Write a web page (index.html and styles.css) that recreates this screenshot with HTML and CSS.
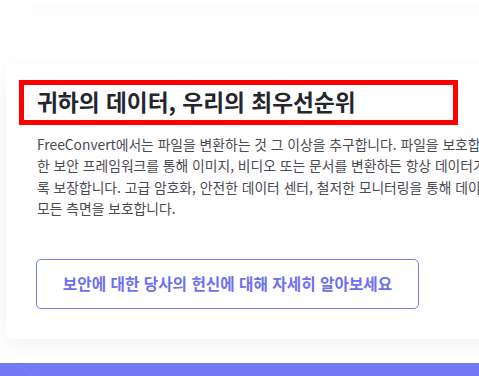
FILE: index.html
```html
<!DOCTYPE html>
<html lang="ko">
<head>
<meta charset="utf-8">
<link rel="stylesheet" href="styles.css">
</head>
<body>
<div class="page">
  <div class="top-card"></div>
  <section class="card">
    <h2 class="title">귀하의 데이터, 우리의 최우선순위</h2>
    <p class="desc">
      <span class="line">FreeConvert에서는 파일을 변환하는 것 그 이상을 추구합니다. 파일을 보호합니다. 강력</span>
      <span class="line">한 보안 프레임워크를 통해 이미지, 비디오 또는 문서를 변환하든 항상 데이터가 안전하도</span>
      <span class="line">록 보장합니다. 고급 암호화, 안전한 데이터 센터, 철저한 모니터링을 통해 데이터 보안의</span>
      <span class="line">모든 측면을 보호합니다.</span>
    </p>
    <a class="btn" href="#">보안에 대한 당사의 헌신에 대해 자세히 알아보세요</a>
  </section>
  <div class="band"></div>
</div>
</body>
</html>
```
FILE: styles.css
```css
html, body {
  margin: 0;
  padding: 0;
  background: #ffffff;
  overflow: hidden;
}
body {
  font-family: "Noto Sans CJK KR", "Noto Sans", sans-serif;
  width: 479px;
  height: 376px;
}
.page {
  display: flex;
  flex-direction: column;
  width: 800px;
}
.top-card {
  margin-left: 6px;
  height: 4px;
  width: 780px;
  background: #fff;
  border-radius: 0 0 6px 6px;
  box-shadow: 0 8px 28px rgba(0, 0, 0, 0.07);
  position: relative;
  z-index: 1;
}
.card {
  margin-top: 60px;
  margin-left: 6px;
  width: 780px;
  height: 275px;
  box-sizing: border-box;
  background: #fff;
  border-radius: 6px;
  box-shadow: 0 6px 26px rgba(0, 0, 0, 0.06);
  display: flex;
  flex-direction: column;
  align-items: flex-start;
  padding: 16px 0 0 13px;
}
.title {
  margin: 0;
  box-sizing: border-box;
  width: 439px;
  height: 45px;
  border: 5px solid #ff0000;
  padding-left: 13px;
  font-size: 22.7px;
  line-height: 34px;
  font-weight: 700;
  color: #24252e;
  white-space: nowrap;
}
.desc {
  margin: 9px 0 0 18px;
  font-size: 13.8px;
  line-height: 21.4px;
  color: #4a4a52;
  display: flex;
  flex-direction: column;
}
.line {
  white-space: nowrap;
}
.btn {
  margin: 39px 0 0 17px;
  box-sizing: border-box;
  width: 383px;
  height: 50px;
  border: 1px solid #7a7ef2;
  border-radius: 5px;
  display: flex;
  align-items: center;
  justify-content: center;
  font-size: 15.7px;
  font-weight: 700;
  color: #6d71ee;
  text-decoration: none;
  white-space: nowrap;
}
.band {
  margin-top: 24px;
  height: 20px;
  background: #7379f4;
  position: relative;
  overflow: hidden;
}
.band::before {
  content: "";
  position: absolute;
  left: -60px;
  top: -2px;
  width: 100px;
  height: 60px;
  border-radius: 50%;
  border-right: 1px solid rgba(255, 255, 255, 0.12);
}
```
